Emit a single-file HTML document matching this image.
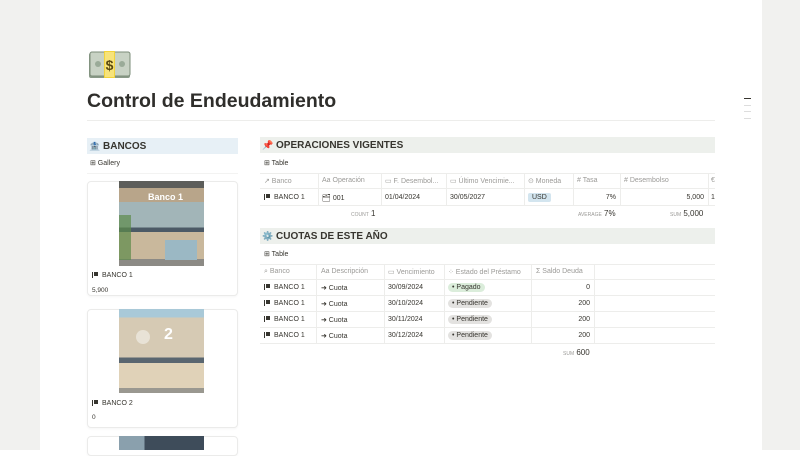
<!DOCTYPE html>
<html><head><meta charset="utf-8"><style>
*{margin:0;padding:0;box-sizing:border-box}
body{width:800px;height:450px;overflow:hidden;background:#fff;font-family:"Liberation Sans",sans-serif;color:#37352f;position:relative}
.a{position:absolute;white-space:nowrap}
.side{left:0;top:0;width:40px;height:450px;background:#f1f1ef}
.rside{left:762px;top:0;width:38px;height:450px;background:#f1f1ef}
.band{height:16px;font-weight:bold;font-size:10px;line-height:16px;padding-left:2px}
.band i{font-style:normal;font-size:9px}
.sm{font-size:7px;color:#37352f}
.hd{font-size:7px;color:#9b9a97}
.hl{background:#ededeb;height:1px}
.vl{background:#ededeb;width:1px}
.card{border:1px solid #ebebea;border-radius:4px;background:#fff;box-shadow:0 1px 2px rgba(0,0,0,.04)}
.tag{border-radius:6px;padding:0 4px;font-size:7px;line-height:9px}
.flag{display:inline-block;width:6px;height:6px;border-left:1.2px solid #37352f;background:linear-gradient(#37352f,#37352f) 1px 0/5px 4px no-repeat;vertical-align:-1px;margin-right:4px}
.r{top:1px}
</style></head><body>
<div class="a side"></div><div class="a rside"></div>
<div class="a" style="left:744px;top:98px;width:7px;height:1px;background:#37352f"></div>
<div class="a" style="left:744px;top:105px;width:7px;height:1px;background:#ddd"></div>
<div class="a" style="left:744px;top:111px;width:7px;height:1px;background:#ddd"></div>
<div class="a" style="left:744px;top:118px;width:7px;height:1px;background:#ddd"></div>
<svg class="a" style="left:88px;top:50px" width="43" height="30" viewBox="0 0 43 30"><rect x="1" y="3" width="41" height="25" rx="2" fill="#8a9a88"/><rect x="2" y="2" width="40" height="24" rx="2" fill="#c8d2c4" stroke="#7b8c78"/><circle cx="10" cy="14" r="3" fill="#9aab98"/><circle cx="34" cy="14" r="3" fill="#9aab98"/><rect x="16" y="1" width="11" height="27" fill="#f2d33b"/><rect x="17" y="2" width="9" height="25" fill="#f7e37a"/><text x="21.5" y="20" font-size="14" font-weight="bold" text-anchor="middle" fill="#5a4a10" font-family="Liberation Sans">$</text></svg>
<div class="a" style="left:87px;top:90px;font-size:19.5px;font-weight:bold;color:#2f2e2b">Control de Endeudamiento</div>
<div class="a hl" style="left:87px;top:120px;width:628px"></div>

<div class="a band" style="left:87px;top:138px;width:151px;background:#e7f0f6"><i>🏦</i> BANCOS</div>
<div class="a sm" style="left:90px;top:159px">&#8862; Gallery</div>
<div class="a hl" style="left:87px;top:173px;width:151px;background:#f3f3f2"></div>
<div class="a card" style="left:87px;top:181px;width:151px;height:115px"></div>
<div class="a" style="left:119px;top:181px;width:85px;height:85px;background:linear-gradient(180deg,#5c5d5a 0 8%,#b8a58a 8% 25%,#a2b5b8 25% 55%,#4c5a66 55% 60%,#c9b89c 60% 92%,#8c8a85 92%);"></div>
<div class="a" style="left:148px;top:192px;font-size:9px;color:#fff;font-weight:bold">Banco 1</div>
<div class="a" style="left:119px;top:215px;width:12px;height:45px;background:#5d8a4a;opacity:.7"></div>
<div class="a" style="left:165px;top:240px;width:32px;height:20px;background:#9bb8c4"></div>
<div class="a sm" style="left:92px;top:272px"><span class="flag"></span>BANCO 1</div>
<div class="a" style="left:92px;top:287px;font-size:6.5px">5,900</div>

<div class="a card" style="left:87px;top:309px;width:151px;height:119px"></div>
<div class="a" style="left:119px;top:309px;width:85px;height:84px;background:linear-gradient(180deg,#a9c9d8 0 10%,#d6cab4 10% 58%,#5a6670 58% 64%,#e0d2b8 64% 94%,#9a9890 94%);"></div>
<div class="a" style="left:164px;top:326px;font-size:16px;color:#fff;font-weight:bold">2</div>
<div class="a" style="left:136px;top:330px;width:14px;height:14px;border-radius:50%;background:#e8e2d6"></div>
<div class="a sm" style="left:92px;top:400px"><span class="flag"></span>BANCO 2</div>
<div class="a" style="left:92px;top:414px;font-size:6.5px">0</div>

<div class="a card" style="left:87px;top:436px;width:151px;height:20px"></div>
<div class="a" style="left:119px;top:436px;width:85px;height:14px;background:linear-gradient(90deg,#8aa0ad 0 30%,#3e4c5a 30%)"></div>

<div class="a band" style="left:260px;top:137px;width:455px;background:#edf0ec"><i>📌</i> OPERACIONES VIGENTES</div>
<div class="a sm" style="left:264px;top:159px">&#8862; Table</div>
<div class="a hl" style="left:260px;top:173px;width:455px"></div>
<div class="a hl" style="left:260px;top:188px;width:455px"></div>
<div class="a hl" style="left:260px;top:205px;width:455px"></div>
<div class="a vl" style="left:318px;top:173px;height:32px"></div>
<div class="a vl" style="left:381px;top:173px;height:32px"></div>
<div class="a vl" style="left:446px;top:173px;height:32px"></div>
<div class="a vl" style="left:524px;top:173px;height:32px"></div>
<div class="a vl" style="left:573px;top:173px;height:32px"></div>
<div class="a vl" style="left:620px;top:173px;height:32px"></div>
<div class="a vl" style="left:708px;top:173px;height:32px"></div>
<div class="a hd" style="left:264px;top:177px">↗ Banco</div>
<div class="a hd" style="left:322px;top:177px">Aa Operación</div>
<div class="a hd" style="left:385px;top:177px">▭ F. Desembol...</div>
<div class="a hd" style="left:450px;top:177px">▭ Último Vencimie...</div>
<div class="a hd" style="left:528px;top:177px">⊙ Moneda</div>
<div class="a hd" style="left:577px;top:177px"># Tasa</div>
<div class="a hd" style="left:624px;top:177px"># Desembolso</div>
<div class="a hd" style="left:711px;top:177px">€</div>
<div class="a sm" style="left:264px;top:194px"><span class="flag"></span>BANCO 1</div>
<div class="a sm" style="left:322px;top:194px">🗂 001</div>
<div class="a sm" style="left:385px;top:194px">01/04/2024</div>
<div class="a sm" style="left:450px;top:194px">30/05/2027</div>
<div class="a tag" style="left:528px;top:193px;background:#d3e5ef;border-radius:2px">USD</div>
<div class="a sm" style="left:573px;top:194px;width:43px;text-align:right">7%</div>
<div class="a sm" style="left:620px;top:194px;width:84px;text-align:right">5,000</div>
<div class="a sm" style="left:711px;top:194px">1</div>
<div class="a" style="left:351px;top:209px;font-size:8px"><span style="font-size:5px;color:#9b9a97">COUNT</span> 1</div>
<div class="a" style="left:578px;top:209px;font-size:8px"><span style="font-size:5px;color:#9b9a97">AVERAGE</span> 7%</div>
<div class="a" style="left:670px;top:209px;font-size:8px"><span style="font-size:5px;color:#9b9a97">SUM</span> 5,000</div>

<div class="a band" style="left:260px;top:228px;width:455px;background:#edf0ec"><i>⚙️</i> CUOTAS DE ESTE AÑO</div>
<div class="a sm" style="left:264px;top:250px">&#8862; Table</div>
<div class="a hl" style="left:260px;top:264px;width:455px"></div>
<div class="a hl" style="left:260px;top:279px;width:455px"></div>
<div class="a hl" style="left:260px;top:295px;width:455px"></div>
<div class="a hl" style="left:260px;top:311px;width:455px"></div>
<div class="a hl" style="left:260px;top:327px;width:455px"></div>
<div class="a hl" style="left:260px;top:343px;width:455px"></div>
<div class="a vl" style="left:316px;top:264px;height:79px"></div>
<div class="a vl" style="left:384px;top:264px;height:79px"></div>
<div class="a vl" style="left:444px;top:264px;height:79px"></div>
<div class="a vl" style="left:531px;top:264px;height:79px"></div>
<div class="a vl" style="left:594px;top:264px;height:79px"></div>
<div class="a hd" style="left:264px;top:268px">⌕ Banco</div>
<div class="a hd" style="left:321px;top:268px">Aa Descripción</div>
<div class="a hd" style="left:388px;top:268px">▭ Vencimiento</div>
<div class="a hd" style="left:448px;top:268px">⁘ Estado del Préstamo</div>
<div class="a hd" style="left:536px;top:268px">Σ Saldo Deuda</div>

<div class="a sm" style="left:264px;top:284px"><span class="flag"></span>BANCO 1</div>
<div class="a sm" style="left:321px;top:284px">➜ Cuota</div>
<div class="a sm" style="left:388px;top:284px">30/09/2024</div>
<div class="a tag" style="left:448px;top:283px;background:#dbeddb">• Pagado</div>
<div class="a sm" style="left:531px;top:284px;width:59px;text-align:right">0</div>

<div class="a sm" style="left:264px;top:300px"><span class="flag"></span>BANCO 1</div>
<div class="a sm" style="left:321px;top:300px">➜ Cuota</div>
<div class="a sm" style="left:388px;top:300px">30/10/2024</div>
<div class="a tag" style="left:448px;top:299px;background:#e3e2e0">• Pendiente</div>
<div class="a sm" style="left:531px;top:300px;width:59px;text-align:right">200</div>

<div class="a sm" style="left:264px;top:316px"><span class="flag"></span>BANCO 1</div>
<div class="a sm" style="left:321px;top:316px">➜ Cuota</div>
<div class="a sm" style="left:388px;top:316px">30/11/2024</div>
<div class="a tag" style="left:448px;top:315px;background:#e3e2e0">• Pendiente</div>
<div class="a sm" style="left:531px;top:316px;width:59px;text-align:right">200</div>

<div class="a sm" style="left:264px;top:332px"><span class="flag"></span>BANCO 1</div>
<div class="a sm" style="left:321px;top:332px">➜ Cuota</div>
<div class="a sm" style="left:388px;top:332px">30/12/2024</div>
<div class="a tag" style="left:448px;top:331px;background:#e3e2e0">• Pendiente</div>
<div class="a sm" style="left:531px;top:332px;width:59px;text-align:right">200</div>

<div class="a" style="left:563px;top:348px;font-size:8px"><span style="font-size:5px;color:#9b9a97">SUM</span> 600</div>
</body></html>
